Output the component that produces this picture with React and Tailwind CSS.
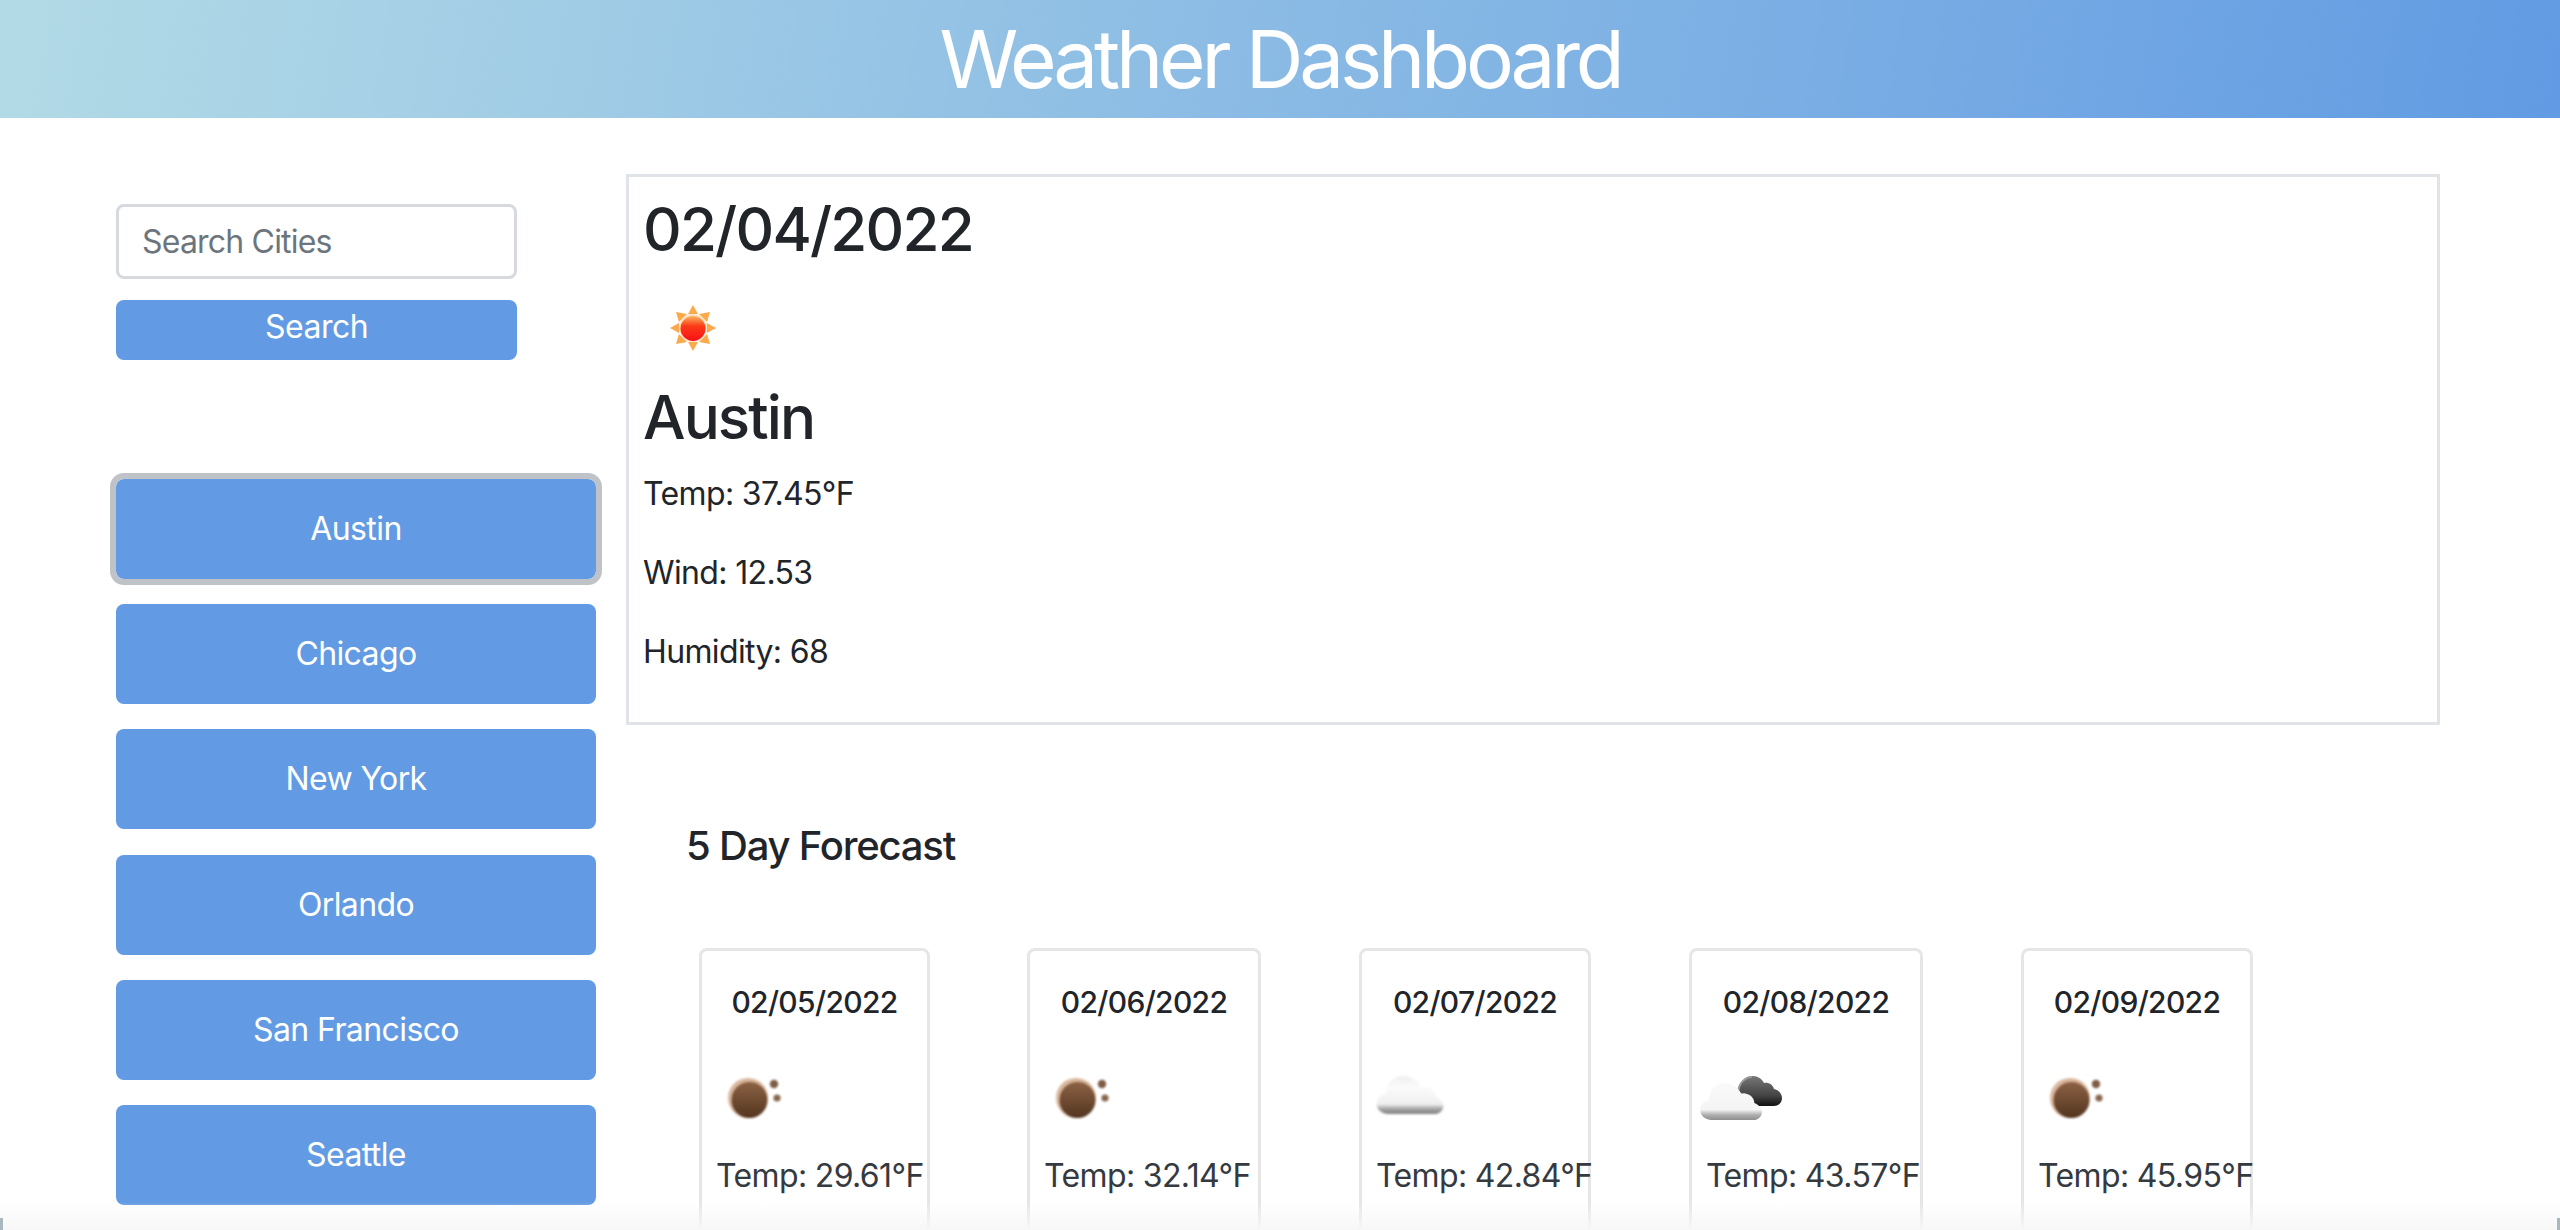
// App.jsx
const font = "font-['Inter','Liberation_Sans',sans-serif]";

const cities = ['Austin', 'Chicago', 'New York', 'Orlando', 'San Francisco', 'Seattle'];

const forecast = [
  { date: '02/05/2022', temp: '29.61', icon: 'moon', x: 'ml-[73px]', w: 'w-[231px]' },
  { date: '02/06/2022', temp: '32.14', icon: 'moon', x: 'ml-[97px]', w: 'w-[234px]' },
  { date: '02/07/2022', temp: '42.84', icon: 'cloud', x: 'ml-[98px]', w: 'w-[232px]' },
  { date: '02/08/2022', temp: '43.57', icon: 'clouds', x: 'ml-[98px]', w: 'w-[234px]' },
  { date: '02/09/2022', temp: '45.95', icon: 'moon', x: 'ml-[98px]', w: 'w-[232px]' },
];

function SunIcon() {
  return (
    <svg viewBox="0 0 100 100" className="w-[100px] h-[100px] block blur-[0.6px]">
      <defs>
        <linearGradient id="sunBall" x1="0" y1="0" x2="0" y2="1">
          <stop offset="0" stopColor="#fbb55a" />
          <stop offset="0.4" stopColor="#fb3a18" />
          <stop offset="1" stopColor="#fb0f18" />
        </linearGradient>
      </defs>
      <g fill="#fba94a">
        <polygon points="50,27 45,36 55,36" />
        <polygon points="50,73 45,64 55,64" />
        <polygon points="27,50 36,45 36,55" />
        <polygon points="73,50 64,45 64,55" />
        <polygon points="33,34 44,36 36,44" />
        <polygon points="67,34 56,36 64,44" />
        <polygon points="33,66 44,64 36,56" />
        <polygon points="67,66 56,64 64,56" />
      </g>
      <circle cx="50" cy="50" r="14" fill="#fde0c0" />
      <circle cx="50" cy="50.5" r="12.5" fill="url(#sunBall)" />
    </svg>
  );
}

function MoonIcon() {
  return (
    <svg viewBox="0 0 100 100" className="w-[100px] h-[100px] block blur-[0.8px]">
      <defs>
        <linearGradient id="moonBall" x1="0" y1="0" x2="0" y2="1">
          <stop offset="0" stopColor="#8c6245" />
          <stop offset="1" stopColor="#53351f" />
        </linearGradient>
      </defs>
      <circle cx="49" cy="49" r="20" fill="#d9b69c" />
      <circle cx="50.5" cy="51" r="18" fill="url(#moonBall)" />
      <circle cx="75" cy="35" r="4.2" fill="#7d5b45" />
      <circle cx="78" cy="49" r="3.6" fill="#87664f" />
    </svg>
  );
}

function CloudShape({ fill }) {
  return <path d="M28 70c-7 0-12-5-12-11 0-6 4-10 9-11 0-11 8-19 17-19 8 0 14 5 17 12 2-1 4-1 6 0 5 1 8 6 8 10 5 2 8 6 8 10 0 5-4 9-9 9z" fill={fill} />;
}

function CloudIcon() {
  return (
    <svg viewBox="0 0 100 100" className="w-[100px] h-[100px] block blur-[0.8px]">
      <defs>
        <linearGradient id="cloudFill" x1="0" y1="0" x2="0" y2="1">
          <stop offset="0" stopColor="#efefef" />
          <stop offset="0.3" stopColor="#fbfbfb" />
          <stop offset="0.74" stopColor="#f0f0f0" />
          <stop offset="0.86" stopColor="#a8a8a8" />
          <stop offset="1" stopColor="#7e7e7e" />
        </linearGradient>
      </defs>
      <g transform="translate(1 0) scale(1.03 .93)">
        <CloudShape fill="url(#cloudFill)" />
      </g>
    </svg>
  );
}

function CloudsIcon() {
  return (
    <svg viewBox="0 0 100 100" className="w-[100px] h-[100px] block blur-[0.7px]">
      <defs>
        <linearGradient id="cloudDark" x1="0" y1="0" x2="0" y2="1">
          <stop offset="0" stopColor="#777" />
          <stop offset="0.65" stopColor="#444" />
          <stop offset="1" stopColor="#111" />
        </linearGradient>
        <linearGradient id="cloudFill2" x1="0" y1="0" x2="0" y2="1">
          <stop offset="0" stopColor="#fafafa" />
          <stop offset="0.72" stopColor="#f4f4f4" />
          <stop offset="0.86" stopColor="#b0b0b0" />
          <stop offset="1" stopColor="#8e8e8e" />
        </linearGradient>
      </defs>
      <g transform="translate(2 -4)">
        <path d="M48 46c1-9 7-15 14-15 5 0 9 3 11 7 5-1 9 2 10 6 5 1 8 5 8 9 0 5-4 8-8 8H62c-6-1-11-5-10-11z" fill="url(#cloudDark)" />
        <path d="M47 47c1-9 7-15 14-15" stroke="#999" strokeWidth="2" fill="none" />
      </g>
      <g transform="translate(-4 8) scale(.95 .9)">
        <CloudShape fill="url(#cloudFill2)" />
      </g>
    </svg>
  );
}

const icons = { moon: MoonIcon, cloud: CloudIcon, clouds: CloudsIcon };

function ForecastCard({ item }) {
  const Icon = icons[item.icon];
  return (
    <div className={`${item.x} ${item.w} h-[400px] shrink-0 rounded-[8px] border-[3px] border-[#e6e6e6] pl-[14px] pt-[27px]`}>
      <h5 className="text-center text-[30px] tracking-[-0.66px] leading-[48px] font-medium text-[#212529] -ml-[14px]">{item.date}</h5>
      <div className="mt-[23px] -ml-[17px]">
        <Icon />
      </div>
      <p className="mt-[3px] text-[32px] tracking-[-0.64px] leading-[48px] text-[#343a40] whitespace-nowrap">Temp: {item.temp}°F</p>
    </div>
  );
}

export default function App() {
  return (
    <div className={`${font} relative h-screen overflow-hidden bg-white`}>
      <header className="h-[118px] bg-linear-[100deg] from-[#b2dae6] to-[#629be3] text-center">
        <h1 className="text-[80px] tracking-[-4.2px] leading-[118px] font-normal text-white">Weather Dashboard</h1>
      </header>

      <div className="flex">
        <aside className="w-[626px] shrink-0 pl-[116px] pt-[86px]">
          <input
            placeholder="Search Cities"
            className="block w-[401px] h-[75px] rounded-[8px] border-[3px] border-[#d6dadf] px-[23px] text-[32px] tracking-[-0.8px] placeholder:text-[#6c757d] outline-none"
          />
          <button className="block mt-[21px] w-[401px] h-[60px] rounded-[8px] bg-[#629be3] text-[32px] tracking-[-0.5px] leading-[48px] text-white pb-[6px]">
            Search
          </button>
          <div className="mt-[119px] flex flex-col gap-[25.2px]">
            {cities.map((city, i) => (
              <button
                key={city}
                className={`w-[480px] h-[100px] rounded-[8px] bg-[#629be3] text-[32px] tracking-[-0.6px] text-white ${i === 0 ? 'outline-[6px] outline-solid outline-[#bfc2c7]' : ''}`}
              >
                {city}
              </button>
            ))}
          </div>
        </aside>

        <main className="flex-1 pt-[56px]">
          <section className="w-[1814px] h-[551px] border-[3px] border-[#e0e4e8] pl-[14px] pt-[16px]">
            <h2 className="text-[60px] tracking-[-1.8px] leading-[72px] font-medium text-[#212529]">02/04/2022</h2>
            <div className="mt-[13px] mb-[3px]">
              <SunIcon />
            </div>
            <h2 className="text-[60px] tracking-[-1.9px] leading-[72px] font-medium text-[#212529]">Austin</h2>
            <p className="mt-[17px] text-[32px] tracking-[-0.64px] leading-[48px] text-[#212529]">Temp: 37.45°F</p>
            <p className="mt-[31px] text-[32px] tracking-[-0.64px] leading-[48px] text-[#212529]">Wind: 12.53</p>
            <p className="mt-[31px] text-[32px] tracking-[-0.64px] leading-[48px] text-[#212529]">Humidity: 68</p>
          </section>

          <h4 className="mt-[97px] ml-[60px] text-[40px] tracking-[-1.2px] leading-[48px] font-medium text-[#212529]">5 Day Forecast</h4>

          <div className="mt-[78px] flex">
            {forecast.map((item) => (
              <ForecastCard key={item.date} item={item} />
            ))}
          </div>
        </main>
      </div>

      {/* window shadow fading out along the bottom edge, rounded corners of the window */}
      <div className="absolute inset-x-0 bottom-0 h-[28px] bg-linear-to-b from-transparent to-[#f7f7f7] pointer-events-none" />
      <div className="absolute left-0 bottom-0 w-[3px] h-[12px] bg-[#a9b8bf]" />
      <div className="absolute right-0 bottom-0 w-[3px] h-[12px] bg-[#a9b8bf]" />
    </div>
  );
}
